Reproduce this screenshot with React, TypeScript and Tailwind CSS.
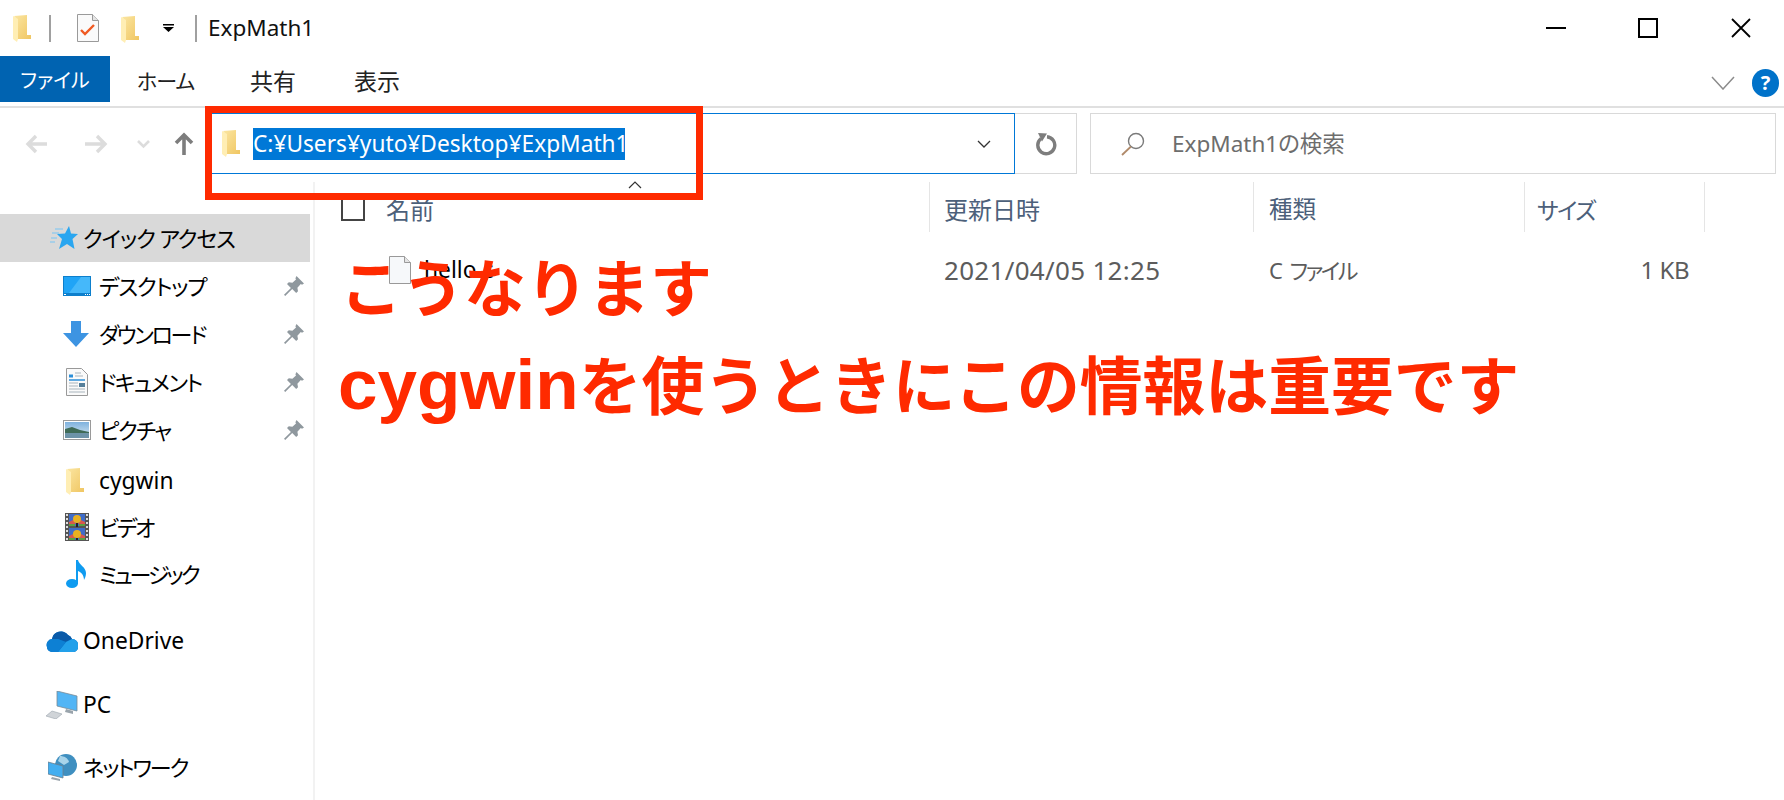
import React from 'react';

const uiFont = "font-['Noto_Sans','Noto_Sans_CJK_JP',sans-serif] [font-feature-settings:'palt']";

function FolderIcon({ className }: { className?: string }) {
  return (
    <svg viewBox="0 0 18 27" className={className}>
      <defs>
        <linearGradient id="fold" x1="0" y1="0" x2="1" y2="1">
          <stop offset="0" stopColor="#fbe6a2" />
          <stop offset="1" stopColor="#f0c662" />
        </linearGradient>
      </defs>
      <path d="M1 1l13-1v20h4v4H5V6z" fill="url(#fold)" />
      <path d="M0 1l5 3v20l-1 3-4-3z" fill="#ffeeb4" />
    </svg>
  );
}

function Pin() {
  return (
    <svg viewBox="0 0 20 20" className="w-5 h-5">
      <path d="M12.500 0l7.500 7.500-2 1.200-1.200-.6-3.400 3.600.6 3.600-1.800 1.800-4-4L1.200 20 0 18.800 6.900 12 3 8l1.800-1.800 3.600.6L12 3.400l-.6-1.200z" fill="#8f989e" />
    </svg>
  );
}

function NavRow({ icon, label, pinned, textClass, rowClass = '' }: { icon: React.ReactNode; label: string; pinned?: boolean; textClass: string; rowClass?: string }) {
  return (
    <div className={`h-[48px] flex items-center pl-[63px] pr-[6px] ${rowClass}`}>
      <div className="w-[36px] flex items-center">{icon}</div>
      <span className={`flex-1 text-black whitespace-nowrap ${textClass}`}>{label}</span>
      {pinned && <Pin />}
    </div>
  );
}

function Header({ label, className }: { label: string; className: string }) {
  return (
    <div className={`h-[50px] pt-[6px] flex items-center border-r border-[#e5e5e5] text-[#4c607a] ${className}`}>
      {label}
    </div>
  );
}

export default function App() {
  return (
    <div className={`relative w-[1784px] h-[800px] overflow-hidden bg-white ${uiFont}`}>
      {/* title bar */}
      <div className="h-[56px] flex items-center">
        <FolderIcon className="w-[18px] h-[27px] ml-[13px]" />
        <div className="w-[2px] h-[27px] bg-[#a0a0a0] ml-[18px]" />
        <svg viewBox="0 0 22 28" className="w-[22px] h-[28px] ml-[26px]">
          <path d="M.5.500h15l6 6v21H.5z" fill="#fafafa" stroke="#9a9a9a" />
          <path d="M15.500.500v6h6" fill="#e4e4e4" stroke="#9a9a9a" />
          <path d="M4 16l4 4 9-9" fill="none" stroke="#f05a22" strokeWidth="2.400" />
        </svg>
        <FolderIcon className="w-[18px] h-[27px] ml-[22px] mt-[3px]" />
        <svg viewBox="0 0 11 8" className="w-[11px] h-[8px] ml-[24px]">
          <path d="M0 0h11v1.500H0zM0 3h11L5.500 8z" fill="#000" />
        </svg>
        <div className="w-[2px] h-[27px] bg-[#a0a0a0] ml-[21px]" />
        <span className="ml-[11px] text-[22.5px] text-[#111]">ExpMath1</span>
        <div className="ml-auto flex items-center">
          <div className="w-[20px] h-[2px] bg-black" />
          <div className="w-[20px] h-[20px] border-2 border-black ml-[72px]" />
          <svg viewBox="0 0 20 20" className="w-[20px] h-[20px] ml-[73px] mr-[33px]">
            <path d="M1 1l18 18M19 1L1 19" stroke="#000" strokeWidth="1.800" />
          </svg>
        </div>
      </div>

      {/* ribbon tabs */}
      <div className="h-[52px] border-b-2 border-[#e0e0e0] flex items-start">
        <div className="w-[110px] h-[46px] pt-[3px] bg-[#0063b1] text-white text-[20px] flex items-center justify-center">ファイル</div>
        <span className="ml-[27px] h-[46px] pt-[5px] flex items-center text-[21px] text-[#222] tracking-[-1px]">ホーム</span>
        <span className="ml-[56px] h-[46px] pt-[5px] flex items-center text-[23px] text-[#222]">共有</span>
        <span className="ml-[58px] h-[46px] pt-[5px] flex items-center text-[23px] text-[#222]">表示</span>
        <div className="ml-auto h-[52px] flex items-center mr-[5px] pt-[2px]">
          <svg viewBox="0 0 24 14" className="w-[24px] h-[14px]">
            <path d="M1 1l11 12 11-12" fill="none" stroke="#8c8c8c" strokeWidth="1.500" />
          </svg>
          <div className="ml-[17px] w-[27px] h-[28px] rounded-full bg-[#0072c9] text-white text-[20px] font-bold flex items-center justify-center">?</div>
        </div>
      </div>

      {/* address row */}
      <div className="h-[68px] pt-[5px] flex items-start">
        <div className="w-[211px] h-[61px] flex items-center">
          <svg viewBox="0 0 170 24" className="w-[170px] h-[24px] ml-[25px]">
            <path d="M22 12H3m8-8l-8 8 8 8M60 12h20m-8-8l8 8-8 8" fill="none" stroke="#dcdcdc" strokeWidth="3.400" />
            <path d="M113 9l5.500 5.500 5.500-5.500" fill="none" stroke="#dcdcdc" strokeWidth="2.600" />
            <path d="M159 23V3m-8 8l8-8 8 8" fill="none" stroke="#7d7d7d" strokeWidth="3.600" />
          </svg>
        </div>
        <div className="w-[804px] h-[61px] border border-[#0078d7] flex items-center">
          <FolderIcon className="w-[18px] h-[27px] ml-[10px]" />
          <span className="ml-[13px] bg-[#0078d7] text-white text-[22.7px] leading-[32px] w-[372px] whitespace-nowrap">C:¥Users¥yuto¥Desktop¥ExpMath1</span>
          <svg viewBox="0 0 14 8" className="w-[14px] h-[8px] ml-auto mr-[23px]">
            <path d="M1 1l6 6 6-6" fill="none" stroke="#333" strokeWidth="1.300" />
          </svg>
        </div>
        <div className="w-[62px] h-[61px] border border-l-0 border-[#d9d9d9] flex items-center justify-center">
          <svg viewBox="0 0 22 24" className="w-[22px] h-[24px]">
            <path d="M6 6.500a8.500 8.500 0 1 0 6-1.800" fill="none" stroke="#7d7d7d" strokeWidth="3.400" />
            <path d="M3 1l9 .5-5 8z" fill="#7d7d7d" />
          </svg>
        </div>
        <div className="ml-[13px] w-[686px] h-[61px] border border-[#d9d9d9] flex items-center">
          <svg viewBox="0 0 24 24" className="w-[24px] h-[24px] ml-[30px]">
            <circle cx="15" cy="9" r="7.500" fill="none" stroke="#7a7a7a" strokeWidth="1.400" />
            <path d="M10 14.500L1 23" stroke="#b08a6a" strokeWidth="1.800" />
          </svg>
          <span className="ml-[27px] text-[22.5px] text-[#6d6d6d]">ExpMath1の検索</span>
        </div>
      </div>

      {/* main area */}
      <div className="flex h-[618px] mt-[6px]">
        <div className="w-[310px] pt-[32px]">
          <div className="h-[48px] bg-[#d9d9d9] flex items-center pl-[50px]">
            <svg viewBox="0 0 28 24" className="w-[28px] h-[24px]">
              <path d="M19 0l2 7.500 7 .5-5.500 5 2 10-7.500-5-8 5 3-10-5-5 8-.5z" fill="#2aa6f0" />
              <path d="M5 3h8M2 7h7M1 12h6M0 16h5" stroke="#78c6f5" strokeWidth="1.200" />
            </svg>
            <span className="ml-[5px] text-[22px] tracking-[-1.100px] text-black">クイック アクセス</span>
          </div>
          <NavRow
            label="デスクトップ"
            textClass="text-[22px] tracking-[-1.200px]"
            pinned
            icon={
              <svg viewBox="0 0 28 20" className="w-[28px] h-[20px]">
                <rect width="28" height="20" fill="#0d7fcc" />
                <rect x="1" y="1" width="26" height="16" fill="#20a4f6" />
                <path d="M6 17L18 1h9v16z" fill="#45b8fa" />
                <path d="M1 18.500h2M22 18.500h1M24 18.500h1M26 18.500h1" stroke="#fff" />
              </svg>
            }
          />
          <NavRow
            label="ダウンロード"
            textClass="text-[22px] tracking-[-2.300px]"
            pinned
            icon={
              <svg viewBox="0 0 26 26" className="w-[26px] h-[26px]">
                <path d="M8 0h10v12h8L13 26 0 12h8z" fill="#3d94e2" />
              </svg>
            }
          />
          <NavRow
            label="ドキュメント"
            textClass="text-[22px] tracking-[-1.600px]"
            pinned
            icon={
              <svg viewBox="0 0 22 28" className="w-[22px] h-[28px] ml-[3px]">
                <path d="M.5.500h15l6 6v21H.5z" fill="#fafafa" stroke="#999" />
                <path d="M3 12h16" stroke="#2c8fd8" strokeWidth="1.500" />
                <path d="M3 8h4" stroke="#2c8fd8" strokeWidth="3" />
                <path d="M9 5h6M9 8h8M3 15h9M3 18h9M3 21h16M3 24h16" stroke="#a8b4bc" strokeWidth="1" />
                <rect x="13" y="15" width="6" height="4" fill="#567f9a" />
              </svg>
            }
          />
          <NavRow
            label="ピクチャ"
            textClass="text-[22px] tracking-[-1.600px]"
            pinned
            icon={
              <svg viewBox="0 0 28 20" className="w-[28px] h-[20px]">
                <defs>
                  <linearGradient id="sky" x1="0" y1="0" x2="0" y2="1">
                    <stop offset="0" stopColor="#7fb2de" />
                    <stop offset="1" stopColor="#dbe9f2" />
                  </linearGradient>
                </defs>
                <rect x=".5" y=".5" width="27" height="19" fill="#fff" stroke="#9a9a9a" />
                <rect x="2" y="2" width="24" height="16" fill="url(#sky)" />
                <path d="M2 9l7-2 8 3 9 2v2H2z" fill="#3f6b57" />
                <rect x="2" y="13" width="24" height="5" fill="#6d93a8" />
              </svg>
            }
          />
          <NavRow label="cygwin" rowClass="mt-[3px]" textClass="text-[22.8px]" icon={<FolderIcon className="w-[18px] h-[27px] ml-[3px]" />} />
          <NavRow
            label="ビデオ"
            rowClass="mt-[-2px]"
            textClass="text-[22px] tracking-[-2.300px]"
            icon={
              <svg viewBox="0 0 24 28" className="w-[24px] h-[28px] ml-[2px]">
                <rect width="24" height="28" fill="#555" />
                <path d="M1 2h2M1 6h2M1 10h2M1 14h2M1 18h2M1 22h2M1 26h2M21 2h2M21 6h2M21 10h2M21 14h2M21 18h2M21 22h2M21 26h2" stroke="#ddd" strokeWidth="2" />
                <rect x="4" y="1" width="16" height="12" fill="#3f6cc8" />
                <rect x="4" y="15" width="16" height="12" fill="#3f6cc8" />
                <path d="M4 9l4-2 3 4H4zM20 9l-4-2-3 4h7zM4 23l4-2 3 4H4zM20 23l-4-2-3 4h7z" fill="#d8584c" />
                <circle cx="12" cy="6" r="4" fill="#e8b020" />
                <circle cx="12" cy="21" r="4" fill="#e8b020" />
                <path d="M12 10v4M12 25v2" stroke="#222" strokeWidth="2" />
                <path d="M4 11h6v2H4zM14 11h6v2h-6zM4 25h6v2H4zM14 25h6v2h-6z" fill="#5aa040" />
              </svg>
            }
          />
          <NavRow
            label="ミュージック"
            rowClass="mt-[-1px]"
            textClass="text-[22px] tracking-[-3px]"
            icon={
              <svg viewBox="0 0 20 28" className="w-[20px] h-[28px] ml-[3px]">
                <ellipse cx="6" cy="23.500" rx="6" ry="4.500" fill="#0f9bf0" />
                <path d="M10 0h2c1 5 8 7 8 13 0 3-1 5-2 7 0-5-3-8-6-9v13h-2z" fill="#0f9bf0" />
              </svg>
            }
          />
          <div className="h-[48px] mt-[19px] flex items-center pl-[46px]">
            <svg viewBox="0 0 32 21" className="w-[32px] h-[21px]">
              <path d="M1 16a6 6 0 0 1 5-8 9 9 0 0 1 16-4 7 7 0 0 1 4 4 6 6 0 0 1 6 7 5 5 0 0 1-4 6H6a5 5 0 0 1-5-5z" fill="#0a6fc0" />
              <path d="M6 8a9 9 0 0 1 16-4 7 7 0 0 1 4 4l-7 3-7-3z" fill="#0a5aa8" />
              <path d="M12 21l8-10 6-3a6 6 0 0 1 6 7 5 5 0 0 1-4 6z" fill="#22a0ea" />
              <path d="M1 16a6 6 0 0 1 5-8l6 0 8 3-8 10H6a5 5 0 0 1-5-5z" fill="#0d80d4" />
            </svg>
            <span className="ml-[5px] text-[22.8px] text-black">OneDrive</span>
          </div>
          <div className="h-[48px] mt-[16px] flex items-center pl-[46px]">
            <svg viewBox="0 0 32 28" className="w-[32px] h-[28px]">
              <path d="M11 0l20 5v15L11 15z" fill="#52b5f5" stroke="#7a8a96" strokeWidth=".8" />
              <path d="M20 18l7 2v3l-8-2z" fill="#9aa4ac" />
              <path d="M6 20l10 3-6 5-10-3z" fill="#d0d4d8" stroke="#9aa4ac" strokeWidth=".6" />
            </svg>
            <span className="ml-[5px] text-[22.8px] text-black">PC</span>
          </div>
          <div className="h-[48px] mt-[14px] flex items-center pl-[48px]">
            <svg viewBox="0 0 30 28" className="w-[30px] h-[28px]">
              <circle cx="18" cy="12" r="11" fill="#3f8fc0" />
              <path d="M12 3c4 0 8 2 9 6l-5 3-6-4z" fill="#a8d4ea" />
              <path d="M0 9l15 4v12L0 21z" fill="#43aef0" stroke="#6f7f8a" strokeWidth=".8" />
              <path d="M4 24l8 2v2l-9-2z" fill="#9aa4ac" />
            </svg>
            <span className="ml-[5px] text-[22px] tracking-[-2px] text-black">ネットワーク</span>
          </div>
        </div>

        {/* file list */}
        <div className="ml-[3px] flex-1 border-l-2 border-[#f2f2f2]">
          <div className="flex">
            <Header label="名前" className="w-[615px] pl-[71px] text-[24px]" />
            <Header label="更新日時" className="w-[324px] pl-[14px] text-[24px]" />
            <Header label="種類" className="w-[271px] pl-[15px] text-[23.5px]" />
            <Header label="サイズ" className="w-[180px] pl-[12px] text-[23px] tracking-[-1.500px]" />
          </div>
          <div className="flex items-center h-[46px] mt-[15px] text-[#5c5c5c]">
            <svg viewBox="0 0 22 28" className="w-[22px] h-[28px] ml-[74px]">
              <path d="M.5.500h15l6 6v21H.5z" fill="#f6f8fa" stroke="#999" />
              <path d="M15.500.500v6h6" fill="#e4e4e4" stroke="#999" />
            </svg>
            <span className="ml-[13px] w-[520px] text-[22.8px] text-black">hello.c</span>
            <span className="w-[325px] text-[26px] tracking-[0.300px]">2021/04/05 12:25</span>
            <span className="w-[270px] text-[22px] tracking-[-2.500px] [word-spacing:6px]">C ファイル</span>
            <span className="w-[150px] text-right text-[24px] tracking-[-0.500px]">1 KB</span>
          </div>
        </div>
      </div>

      {/* checkbox in the column header */}
      <div className="absolute left-[341px] top-[197px] w-[24px] h-[24px] border-2 border-[#444]" />
      {/* collapse caret */}
      <svg viewBox="0 0 14 8" className="absolute left-[628px] top-[181px] w-[14px] h-[8px]">
        <path d="M1 7l6-6 6 6" fill="none" stroke="#333" strokeWidth="1.200" />
      </svg>

      {/* red annotation */}
      <div className="absolute left-[205px] top-[106px] w-[498px] h-[94px] border-[7px] border-[#ff2a00]" />
      <div className="absolute left-[340px] top-[250px] text-[62px] leading-[82px] font-bold text-[#ff2a00] whitespace-nowrap font-['Liberation_Sans','Noto_Sans_CJK_JP',sans-serif] [font-feature-settings:normal]">
        こうなります
      </div>
      <div className="absolute left-[338px] top-[344px] text-[62.800px] leading-[82px] font-bold text-[#ff2a00] whitespace-nowrap font-['Liberation_Sans','Noto_Sans_CJK_JP',sans-serif] [font-feature-settings:normal]">
        <span className="text-[71px]">cygwin</span>を使うときにこの情報は重要です
      </div>
    </div>
  );
}
